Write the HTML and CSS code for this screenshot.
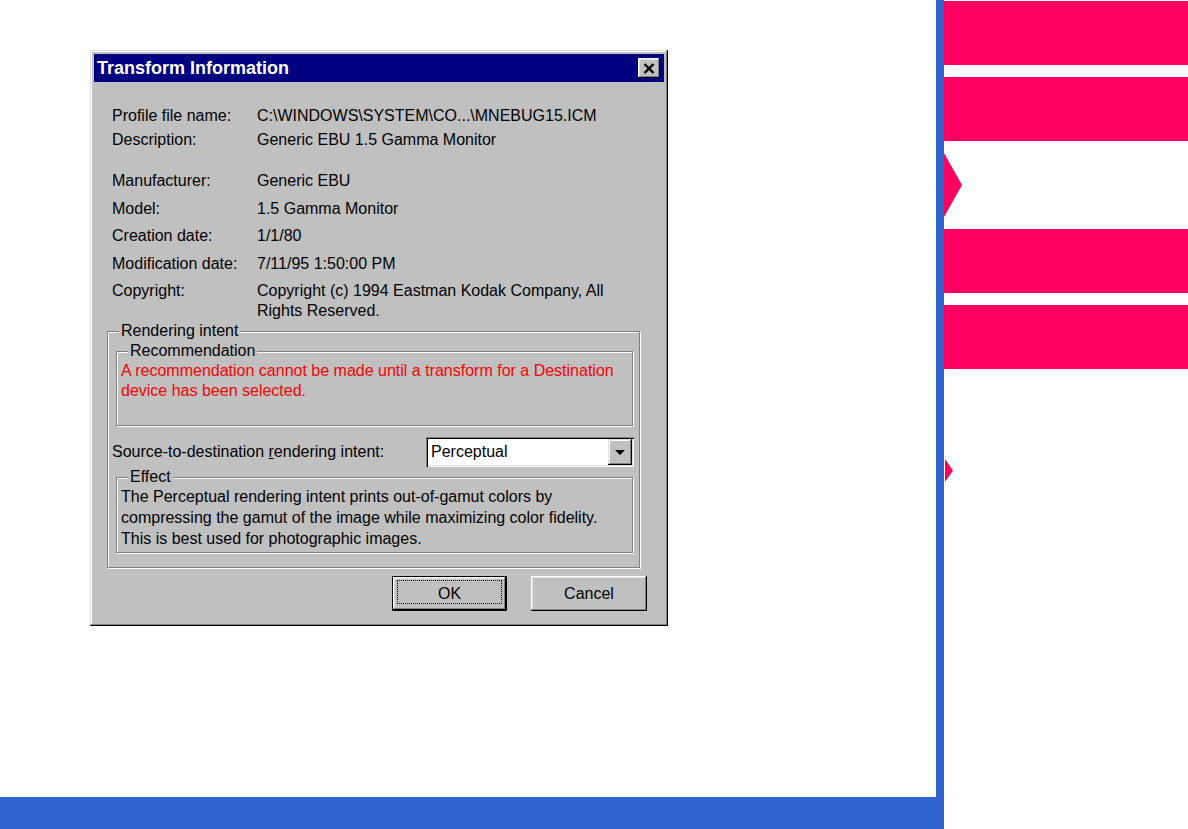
FILE: index.html
```html
<!DOCTYPE html>
<html lang="en">
<head>
    <meta charset="UTF-8">
    <title>Transform Information</title>
    <link rel="stylesheet" href="styles.css">
</head>
<body>
    <div class="page">
        <div class="main">
            <div class="stage">
                <!-- Dialog -->
                <div class="dialog">
                    <div class="titlebar">
                        <span class="title">Transform Information</span>
                        <span class="close-btn">
                            <svg width="12" height="11" viewBox="0 0 12 11"><path d="M1.5 1 L10.5 10 M10.5 1 L1.5 10" stroke="#000" stroke-width="2.4" fill="none"/></svg>
                        </span>
                    </div>

                    <div class="dialog-body">
                        <div class="info">
                            <span>Profile file name:</span><span>C:\WINDOWS\SYSTEM\CO...\MNEBUG15.ICM</span>
                            <span>Description:</span><span>Generic EBU 1.5 Gamma Monitor</span>
                        </div>
                        <div class="info info-more">
                            <span>Manufacturer:</span><span>Generic EBU</span>
                            <span>Model:</span><span>1.5 Gamma Monitor</span>
                            <span>Creation date:</span><span>1/1/80</span>
                            <span>Modification date:</span><span>7/11/95 1:50:00 PM</span>
                            <span>Copyright:</span><span>Copyright (c) 1994 Eastman Kodak Company, All<br>Rights Reserved.</span>
                        </div>

                        <fieldset class="group">
                            <legend>Rendering intent</legend>
                            <fieldset class="group recommendation">
                                <legend>Recommendation</legend>
                                <p class="warning">A recommendation cannot be made until a transform for a Destination<br>device has been selected.</p>
                            </fieldset>

                            <div class="intent-row">
                                <span>Source-to-destination <u>r</u>endering intent:</span>
                                <div class="combo">
                                    <span class="combo-value">Perceptual</span>
                                    <span class="combo-btn"><span class="arrow-down"></span></span>
                                </div>
                            </div>

                            <fieldset class="group effect">
                                <legend>Effect</legend>
                                <p>The Perceptual rendering intent prints out-of-gamut colors by<br>compressing the gamut of the image while maximizing color fidelity.<br>This is best used for photographic images.</p>
                            </fieldset>
                        </fieldset>

                        <div class="actions">
                            <button class="btn btn-default" type="button">OK</button>
                            <button class="btn" type="button">Cancel</button>
                        </div>
                    </div>
                </div>
            </div>
            <div class="footer-bar"></div>
        </div>

        <div class="strip"></div>

        <!-- Side navigation -->
        <div class="nav">
            <div class="tab"></div>
            <div class="tab"></div>
            <div class="pointer"></div>
            <div class="tab"></div>
            <div class="tab"></div>
            <div class="pointer pointer-small"></div>
        </div>
    </div>
</body>
</html>
```

FILE: styles.css
```css
/* Reset */
* {
    margin: 0;
    padding: 0;
    box-sizing: border-box;
}

body {
    font-family: "Liberation Sans", Arial, sans-serif;
    font-size: 16px;
    background: #fff;
    color: #000;
}

/* Page frame */
.page {
    display: flex;
    width: 1188px;
    height: 829px;
}

.main {
    width: 936px;
    display: flex;
    flex-direction: column;
}

.stage {
    flex: 1;
    padding: 50px 0 0 90px;
}

.footer-bar {
    height: 32px;
    background: #3264cf;
}

.strip {
    width: 8px;
    background: #3264cf;
}

/* Side navigation */
.nav {
    flex: 1;
    padding-top: 1px;
    display: flex;
    flex-direction: column;
}

.tab {
    height: 64px;
    margin-bottom: 12px;
    background: #ff0060;
}

.pointer {
    width: 18px;
    height: 64px;
    margin-bottom: 12px;
    background: #ff0060;
    clip-path: polygon(0 0, 100% 50%, 0 100%);
}

.pointer-small {
    width: 8px;
    height: 23px;
    margin: 78px 0 0 1px;
}

/* Dialog window */
.dialog {
    width: 578px;
    height: 576px;
    padding: 4px;
    background: #c0c0c0;
    box-shadow: inset -1px -1px #000, inset 1px 1px #dfdfdf, inset -2px -2px #808080, inset 2px 2px #fff;
}

.titlebar {
    height: 28px;
    padding: 0 4px 0 3px;
    background: #000080;
    color: #fff;
    display: flex;
    align-items: center;
    justify-content: space-between;
}

.title {
    font-weight: bold;
    font-size: 18px;
}

.close-btn {
    width: 22px;
    height: 20px;
    background: #c0c0c0;
    display: flex;
    align-items: center;
    justify-content: center;
    box-shadow: inset -1px -1px #000, inset 1px 1px #fff, inset -2px -2px #808080, inset 2px 2px #dfdfdf;
}

.dialog-body {
    padding: 24px 17px 0 13px;
}

/* Profile info */
.info {
    display: grid;
    grid-template-columns: 145px 1fr;
    row-gap: 4px;
    line-height: 20px;
    margin-left: 5px;
}

.info-more {
    margin-top: 21px;
    row-gap: 7.5px;
}

/* Group boxes */
.group {
    border: 1px solid #808080;
    box-shadow: 1px 1px 0 #fff, inset 1px 1px 0 #fff;
    padding: 0 5px 14px 4px;
    margin-right: 7px;
}

.group legend {
    margin-left: 7px;
    padding: 0 2px;
    line-height: 20px;
    background: #c0c0c0;
}

.recommendation {
    margin: 0 1px 0 4px;
    padding: 0 4px 24px 4px;
}

.warning {
    color: #ff0000;
    line-height: 20px;
}

.intent-row {
    margin-top: 11px;
    display: flex;
    align-items: center;
    justify-content: space-between;
}

.combo {
    width: 208px;
    height: 30px;
    padding: 2px;
    background: #fff;
    display: flex;
    align-items: center;
    box-shadow: inset 1px 1px #808080, inset 2px 2px #000, inset -1px -1px #fff, inset -2px -2px #dfdfdf;
}

.combo-value {
    flex: 1;
    padding-left: 3px;
}

.combo-btn {
    width: 24px;
    height: 26px;
    background: #c0c0c0;
    display: flex;
    align-items: center;
    justify-content: center;
    box-shadow: inset -1px -1px #000, inset 1px 1px #dfdfdf, inset -2px -2px #808080, inset 2px 2px #fff;
}

.arrow-down {
    width: 0;
    height: 0;
    border-left: 5px solid transparent;
    border-right: 5px solid transparent;
    border-top: 5px solid #000;
}

.effect {
    margin: 1px 1px 0 4px;
    padding: 0 4px 3px 4px;
}

.effect legend {
    line-height: 18px;
}

.effect p {
    line-height: 21px;
}

/* Buttons */
.actions {
    margin-top: 8px;
    display: flex;
    justify-content: flex-end;
    gap: 24px;
}

.btn {
    width: 116px;
    height: 35px;
    border: none;
    background: #c0c0c0;
    font-family: inherit;
    font-size: 16px;
    color: #000;
    position: relative;
    box-shadow: inset -1px -1px #000, inset 1px 1px #fff, inset -2px -2px #808080, inset 2px 2px #dfdfdf;
}

.btn-default {
    width: 115px;
    border: 1px solid #000;
}

.btn-default::after {
    content: "";
    position: absolute;
    top: 3px;
    left: 4px;
    right: 4px;
    bottom: 6px;
    border: 1px dotted #000;
}
```
